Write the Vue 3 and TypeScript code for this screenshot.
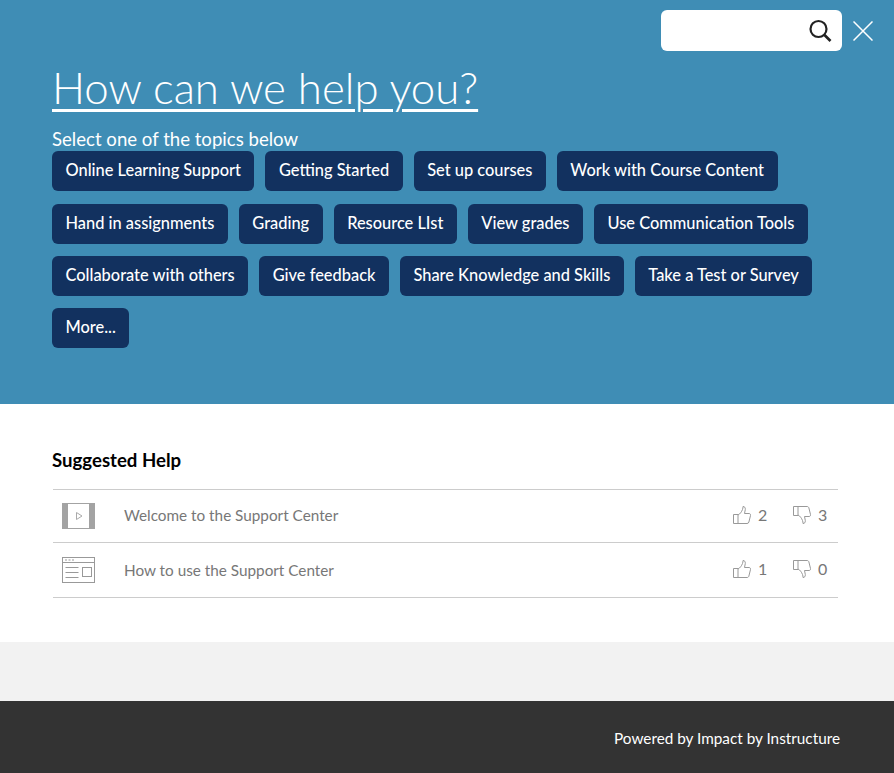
<script setup lang="ts">
const topics: string[][] = [
  ['Online Learning Support', 'Getting Started', 'Set up courses', 'Work with Course Content'],
  ['Hand in assignments', 'Grading', 'Resource LIst', 'View grades', 'Use Communication Tools'],
  ['Collaborate with others', 'Give feedback', 'Share Knowledge and Skills', 'Take a Test or Survey'],
  ['More...'],
]
const items = [
  { title: 'Welcome to the Support Center', up: 2, down: 3, kind: 'video' },
  { title: 'How to use the Support Center', up: 1, down: 0, kind: 'doc' },
]
const thumb = 'M.5 8.500h4.500v9H.5zM5 9c2-1 3.500-3 4.500-5.500.4-1 .5-2 .5-3 1.500 0 2.500 1 2.300 3l-.8 4h4.500c1.200 0 1.800 1 1.500 2l-1.600 6.500c-.3 1-.9 1.500-1.900 1.500H5'
</script>

<template>
  <div class="page">
    <header class="hero">
      <div class="top">
        <div class="search">
          <svg width="26" height="26" viewBox="0 0 26 26" fill="none" stroke="#222" stroke-width="2.200">
            <circle cx="11.500" cy="11" r="8" />
            <path d="M17.500 17l6 6" stroke-width="2.600" />
          </svg>
        </div>
        <svg class="close" width="20" height="20" viewBox="0 0 20 20" stroke="#fff" stroke-width="1.500">
          <path d="M.5.5l19 19M19.500.5l-19 19" />
        </svg>
      </div>
      <h1>How can we help you?</h1>
      <p>Select one of the topics below</p>
      <div class="rows">
        <div v-for="(row, i) in topics" :key="i" class="row">
          <button v-for="t in row" :key="t">{{ t }}</button>
        </div>
      </div>
    </header>
    <main class="help">
      <h2>Suggested Help</h2>
      <div v-for="it in items" :key="it.title" class="item" :class="it.kind">
        <svg v-if="it.kind === 'video'" class="kind clip" width="33" height="26" viewBox="0 0 33 26">
          <rect x="0" y="0" width="33" height="26" fill="#a3a3a3" />
          <rect x="6" y="1" width="21" height="24" fill="#fff" />
          <path d="M14.500 9.500l5.500 3.500-5.500 3.500z" fill="none" stroke="#aaa" />
        </svg>
        <svg v-else class="kind" width="33" height="26" viewBox="0 0 33 26" fill="none" stroke="#999">
          <rect x=".5" y=".5" width="32" height="25" />
          <path d="M.5 5.500h32M3 3h2M6.500 3h2M10 3h2M3.500 10.500h13M3.500 15.500h13M3.500 20.500h13" />
          <rect x="20.500" y="10.500" width="9" height="9" />
        </svg>
        <span class="title">{{ it.title }}</span>
        <span class="vote">
          <svg width="18" height="18" viewBox="0 0 18 18" fill="none" stroke="#999">
            <path :d="thumb" />
          </svg>
          <span>{{ it.up }}</span>
        </span>
        <span class="vote down">
          <svg width="18" height="18" viewBox="0 0 18 18" fill="none" stroke="#999">
            <path :d="thumb" transform="translate(0 18) scale(1 -1)" />
          </svg>
          <span>{{ it.down }}</span>
        </span>
      </div>
    </main>
    <div class="band"></div>
    <footer class="foot">Powered by Impact by Instructure</footer>
  </div>
</template>

<style>
html, body { margin: 0; }
</style>

<style scoped>
.page { width: 894px; height: 773px; display: flex; flex-direction: column; font-family: Lato, sans-serif; overflow: hidden; }
.hero { height: 404px; box-sizing: border-box; background: #3f8db5; color: #fff; padding: 10px 21px 0 52px; }
.top { display: flex; justify-content: flex-end; align-items: center; gap: 11px; height: 41px; }
.search { width: 181px; height: 41px; background: #fff; border-radius: 6px; box-sizing: border-box; display: flex; align-items: center; justify-content: flex-end; padding-right: 9px; }
h1 { margin: 10px 0 0; font-size: 43.800px; line-height: 52px; font-weight: 300; text-decoration: underline; text-decoration-thickness: 3px; text-underline-offset: 5px; }
p { margin: 15px 0 0; font-size: 18.600px; line-height: 22px; }
.rows { display: flex; flex-direction: column; gap: 12.350px; margin-top: 1.400px; }
.row { display: flex; gap: 11px; }
button { height: 40px; padding: 0 13.500px 3px; border: 0; border-radius: 6px; background: #12315f; color: #fff; font: 500 16.400px Lato, sans-serif; white-space: nowrap; }
.help { height: 238px; box-sizing: border-box; background: #fff; padding: 44px 56px 0 53px; }
h2 { margin: 0 0 17px -1px; font-size: 18.600px; line-height: 24px; font-weight: 700; color: #000; }
.item { display: flex; align-items: center; box-sizing: border-box; border-top: 1px solid #ccc; height: 53px; padding-bottom: 2px; color: #777; font-size: 15.300px; }
.item.doc { height: 56px; padding-bottom: 0; border-bottom: 1px solid #ccc; }
.kind { margin-left: 9px; margin-right: 29px; flex: none; }
.clip { margin-top: 2px; }
.title { flex: 1; }
.vote { display: inline-flex; align-items: center; gap: 7px; width: 36px; font-size: 16px; margin-top: -1px; }
.doc .vote { margin-top: -3px; }
.vote.down { margin-left: 24px; width: 45px; }
.band { height: 59px; background: #f2f2f2; }
.foot { height: 72px; box-sizing: border-box; background: #333; color: #fff; font-size: 15.300px; text-align: right; padding: 28px 54px 0 0; }
</style>
